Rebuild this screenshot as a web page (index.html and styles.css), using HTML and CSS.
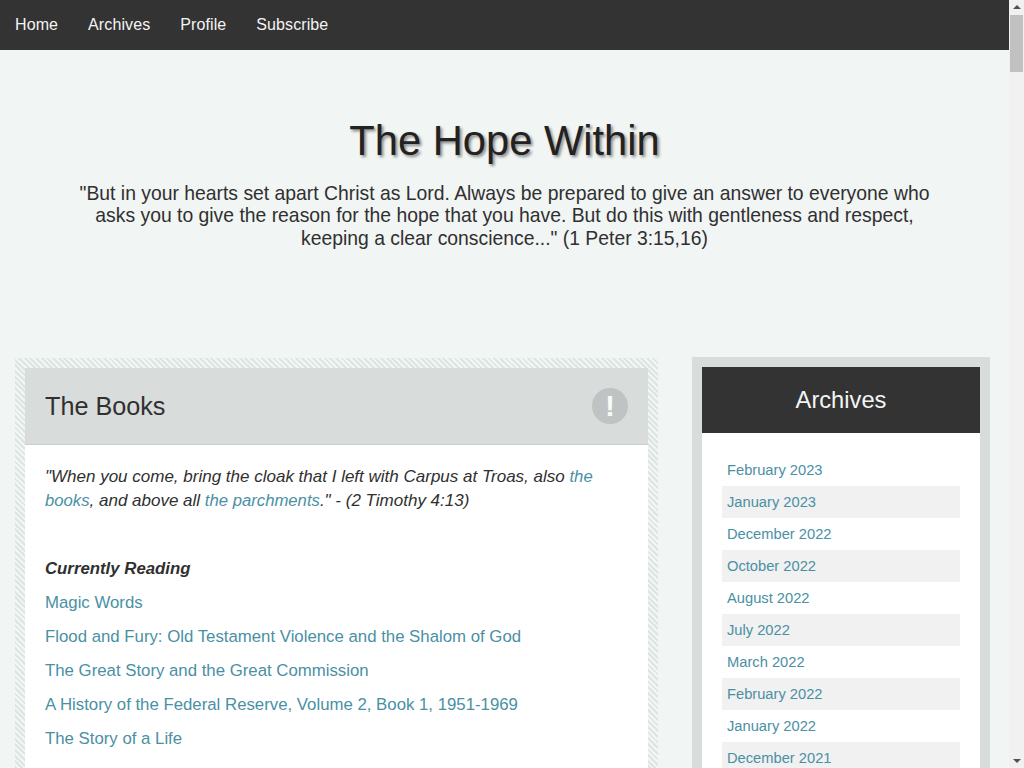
FILE: index.html
```html
<!DOCTYPE html>
<html lang="en">
<head>
    <meta charset="UTF-8">
    <title>The Hope Within</title>
    <link rel="stylesheet" href="styles.css">
</head>
<body>
    <div class="page">
        <nav class="top-nav">
            <a href="#">Home</a>
            <a href="#">Archives</a>
            <a href="#">Profile</a>
            <a href="#">Subscribe</a>
        </nav>

        <header class="site-header">
            <h1>The Hope Within</h1>
            <p>"But in your hearts set apart Christ as Lord. Always be prepared to give an answer to everyone who asks you to give the reason for the hope that you have. But do this with gentleness and respect, keeping a clear conscience..." (1 Peter 3:15,16)</p>
        </header>

        <div class="columns">
            <main class="post-frame">
                <div class="post-title">
                    <h2>The Books</h2>
                    <span class="badge">!</span>
                </div>
                <div class="post-body">
                    <p class="quote">"When you come, bring the cloak that I left with Carpus at Troas, also <a href="#">the books</a>, and above all <a href="#">the parchments</a>." - (2 Timothy 4:13)</p>
                    <p class="reading-head">Currently Reading</p>
                    <p class="book"><a href="#">Magic Words</a></p>
                    <p class="book"><a href="#">Flood and Fury: Old Testament Violence and the Shalom of God</a></p>
                    <p class="book"><a href="#">The Great Story and the Great Commission</a></p>
                    <p class="book"><a href="#">A History of the Federal Reserve, Volume 2, Book 1, 1951-1969</a></p>
                    <p class="book"><a href="#">The Story of a Life</a></p>
                </div>
            </main>

            <aside class="side-frame">
                <h3>Archives</h3>
                <ul class="archive-list">
                    <li><a href="#">February 2023</a></li>
                    <li><a href="#">January 2023</a></li>
                    <li><a href="#">December 2022</a></li>
                    <li><a href="#">October 2022</a></li>
                    <li><a href="#">August 2022</a></li>
                    <li><a href="#">July 2022</a></li>
                    <li><a href="#">March 2022</a></li>
                    <li><a href="#">February 2022</a></li>
                    <li><a href="#">January 2022</a></li>
                    <li><a href="#">December 2021</a></li>
                </ul>
            </aside>
        </div>
    </div>

    <div class="scrollbar">
        <span class="arrow-up"></span>
        <span class="thumb"></span>
        <span class="arrow-down"></span>
    </div>
</body>
</html>
```

FILE: styles.css
```css
* {
    box-sizing: border-box;
}
html, body {
    height: 100%;
    overflow: hidden;
}
body {
    margin: 0;
    font-family: "Liberation Sans", Arial, sans-serif;
    background-color: #f1f5f4;
    color: #303030;
}
a {
    color: #4a90a4;
    text-decoration: none;
}
.page {
    width: 1009px;
}
.top-nav {
    display: flex;
    height: 50px;
    background-color: #333333;
}
.top-nav a {
    padding: 0 15px;
    line-height: 50px;
    font-size: 16px;
    letter-spacing: 0.1px;
    color: #f4f4f4;
}
.site-header {
    height: 307px;
    padding: 61px 75px 0;
    text-align: center;
}
.site-header h1 {
    margin: 0 0 11px;
    font-size: 41.7px;
    line-height: 60px;
    font-weight: normal;
    color: #222222;
    text-shadow: 2px 2px 3px rgba(0,0,0,0.45);
}
.site-header p {
    margin: 0;
    font-size: 19.35px;
    line-height: 22.4px;
}
.columns {
    display: flex;
    align-items: flex-start;
    justify-content: space-between;
    padding: 0 19px 40px 15px;
}
.post-frame {
    width: 643px;
    margin-top: 1px;
    padding: 10px;
    background: repeating-linear-gradient(45deg, #dde6e3 0, #dde6e3 2px, #f1f5f4 2px, #f1f5f4 4px);
}
.post-title {
    display: flex;
    align-items: center;
    justify-content: space-between;
    height: 77px;
    padding: 0 20px;
    background-color: #d8dcdb;
    border-bottom: 1px solid #c9cfcd;
}
.post-title h2 {
    margin: 0;
    font-size: 25.2px;
    font-weight: normal;
}
.badge {
    width: 36px;
    height: 36px;
    border-radius: 50%;
    background-color: #bfc3c3;
    color: #f8f9f9;
    font-size: 30px;
    font-weight: bold;
    line-height: 36px;
    text-align: center;
}
.post-body {
    padding: 20px 20px 30px;
    background-color: white;
    font-size: 16.8px;
    line-height: 24px;
}
.post-body p {
    margin: 0;
}
.post-body .quote {
    font-size: 17px;
    font-style: italic;
}
.quote a {
    font-size: 16.7px;
}
.reading-head {
    padding-top: 44px;
    font-style: italic;
    font-weight: bold;
}
.post-body .book {
    margin-top: 10px;
}
.side-frame {
    width: 298px;
    border: 10px solid #d8dcdb;
    background-color: white;
}
.side-frame h3 {
    margin: 0;
    height: 66px;
    background-color: #333333;
    color: #f4f4f4;
    font-size: 23.7px;
    font-weight: normal;
    line-height: 66px;
    text-align: center;
}
.archive-list {
    list-style: none;
    margin: 0;
    padding: 21px 20px 20px;
    font-size: 14.7px;
}
.archive-list li {
    height: 32px;
    padding-left: 5px;
    line-height: 32px;
}
.archive-list li:nth-child(even) {
    background-color: #f1f1f1;
}
.scrollbar {
    position: fixed;
    top: 0;
    right: 0;
    bottom: 0;
    width: 15px;
    background-color: #f1f1f1;
}
.thumb {
    position: absolute;
    top: 15px;
    left: 1px;
    width: 13px;
    height: 57px;
    background-color: #c1c1c1;
}
.arrow-up, .arrow-down {
    position: absolute;
    left: 4px;
    width: 0;
    height: 0;
    border-left: 4px solid transparent;
    border-right: 4px solid transparent;
}
.arrow-up {
    top: 5px;
    border-bottom: 4px solid #505050;
}
.arrow-down {
    bottom: 5px;
    border-top: 4px solid #505050;
}
```
